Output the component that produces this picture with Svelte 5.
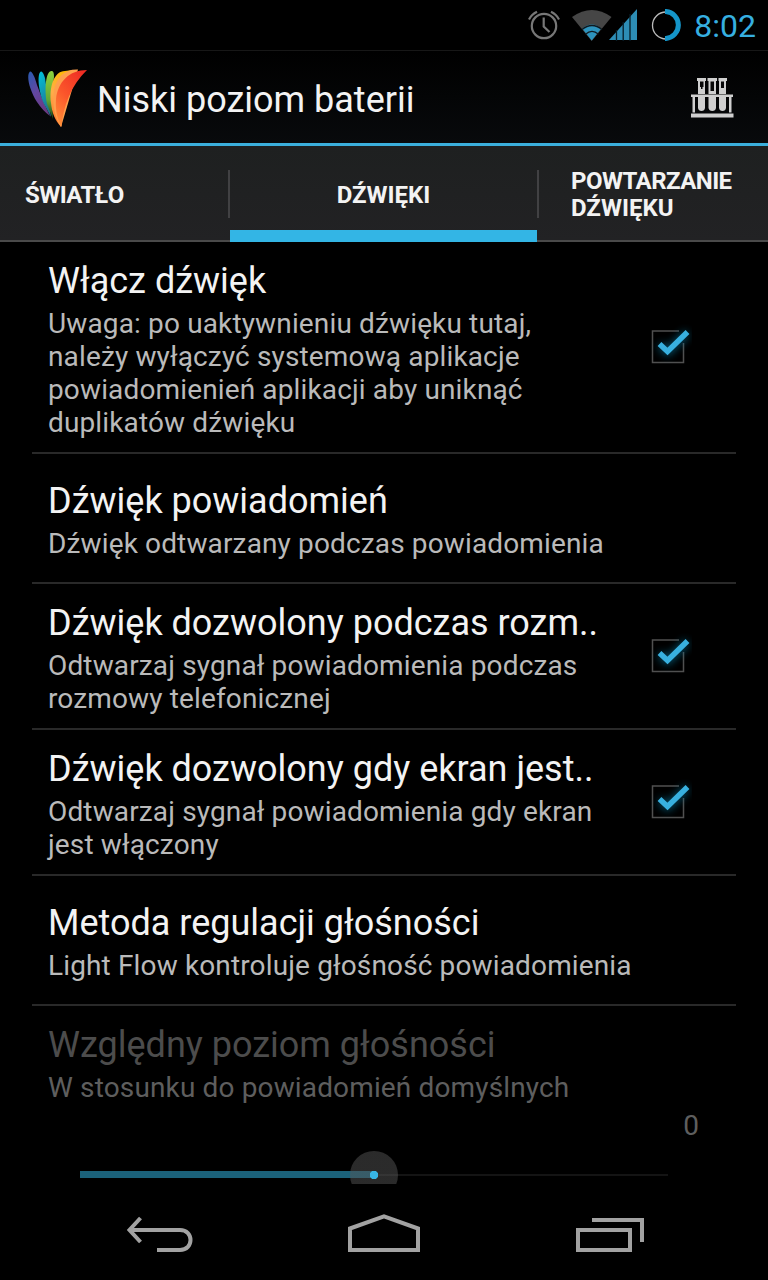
<script lang="ts">
	interface Item {
		title: string;
		lines: string[];
		height: number;
		checked?: boolean;
	}

	let items = $state<Item[]>([
		{
			title: 'Włącz dźwięk',
			lines: [
				'Uwaga: po uaktywnieniu dźwięku tutaj,',
				'należy wyłączyć systemową aplikacje',
				'powiadomienień aplikacji aby uniknąć',
				'duplikatów dźwięku'
			],
			height: 212,
			checked: true
		},
		{ title: 'Dźwięk powiadomień', lines: ['Dźwięk odtwarzany podczas powiadomienia'], height: 130 },
		{
			title: 'Dźwięk dozwolony podczas rozm..',
			lines: ['Odtwarzaj sygnał powiadomienia podczas', 'rozmowy telefonicznej'],
			height: 146,
			checked: true
		},
		{
			title: 'Dźwięk dozwolony gdy ekran jest..',
			lines: ['Odtwarzaj sygnał powiadomienia gdy ekran', 'jest włączony'],
			height: 146,
			checked: true
		},
		{ title: 'Metoda regulacji głośności', lines: ['Light Flow kontroluje głośność powiadomienia'], height: 130 }
	]);
	let volume = 50;
</script>

<div class="screen">
	<div class="status">
		<svg width="258" height="50" viewBox="510 0 258 50" fill="none">
			<g stroke="#777" stroke-width="2.2">
				<circle cx="544" cy="26" r="12.2" />
				<path d="M543.7 17.5V26.5L549.5 32" />
				<path d="M529 19.5Q531.5 14.500 537 11.800M559 19.500Q556.500 14.500 551 11.800" />
			</g>
			<path d="M572 17Q592 3 611.500 17L591.700 41Z" fill="#464646" />
			<path d="M582.200 28.500Q592 20.500 601.200 28.500L591.700 40.500Z" fill="#2d93bd" />
			<path d="M582 29.500Q592 21.500 602 29.500M585.500 34.300Q592 28.500 598.500 34.300" stroke="#101a20" stroke-width="1.300" />
			<path d="M609 40L637 9V40Z" fill="#2d8db5" />
			<path d="M616.500 30V41M623.200 22V41M630 14V41" stroke="#071c26" stroke-width="1.300" />
			<circle cx="666" cy="25.500" r="13.500" stroke="#bcbcbc" stroke-width="1.300" />
			<path d="M665 11.600H666A13.500 13.500 0 0 1 666 38.500H665" stroke="#1495c9" stroke-width="5" />
		</svg>
		<span class="clock">8:02</span>
	</div>

	<header>
		<svg class="logo" width="62" height="62" viewBox="27 67 62 62">
			<defs>
				<linearGradient id="violet" x1="0" y1="0" x2=".6" y2="1"><stop stop-color="#285bb2" /><stop offset=".5" stop-color="#6346a0" /><stop offset="1" stop-color="#693a82" /></linearGradient>
				<linearGradient id="cyan" x1="0" y1="0" x2=".3" y2="1"><stop stop-color="#00c2dd" /><stop offset="1" stop-color="#22718c" /></linearGradient>
				<linearGradient id="green" x1="0" y1="0" x2="0" y2="1"><stop stop-color="#8ed23e" /><stop offset=".6" stop-color="#62a735" /><stop offset="1" stop-color="#1d481b" /></linearGradient>
				<linearGradient id="amber" x1=".6" y1="0" x2=".3" y2="1"><stop stop-color="#ffb900" /><stop offset=".5" stop-color="#ffad4a" /><stop offset="1" stop-color="#ff7429" /></linearGradient>
				<linearGradient id="red" x1=".8" y1="0" x2=".2" y2="1"><stop stop-color="#ef2d24" /><stop offset=".55" stop-color="#fb572b" /><stop offset="1" stop-color="#ff8e38" /></linearGradient>
			</defs>
			<path d="M30 71.500C26 75 29 89 37 102Q43 111 50 116Q44 104 37 85C35 77 32 71 30 71.500Z" fill="url(#violet)" />
			<path d="M41 71.500C37 73 38 90 44 104L51 117Q48 98 45 78Q43 71 41 71.500Z" fill="url(#cyan)" />
			<path d="M52 71C46 70 44 88 47 104L53 119Q51 95 54 77Q54 71 52 71Z" fill="url(#green)" />
			<path d="M65 71C54 71 49 87 51 103C52 113 55 120 61 127L65 90L73 70Z" fill="url(#amber)" />
			<path d="M78 69.500C64 69 57 77 54 90C52 105 55 118 61 127Z" fill="#ffa04c" />
			<path d="M87 70C69 70 58 82 56 99C55 111 58 121 61.500 127C63 107 71 85 87 70Z" fill="url(#red)" />
		</svg>
		<h1>Niski poziom baterii</h1>
		<svg class="tubes" width="44" height="42" viewBox="690 77 44 42" fill="#cfcfcf">
			<path d="M697 78H706V81H705V94H698V81H697ZM707.500 78H717V81H716V94H708.500V81H707.500ZM718.500 78H727V81H726V94H719V81H718.500Z" />
			<path d="M700 81.500H703.500V87H702.500V89H701V87H700ZM710.500 81.500H714V91H710.500ZM721 81.500H724V88H721Z" fill="#080808" />
			<path d="M691 94.500H733V97H731.500V112.500H729V97H726V108Q725.500 111 722.500 111T719 108V97H716V108Q715.500 111 712.300 111T708.500 108V97H705V108Q704.500 111 701.500 111T698 108V97H695V112.500H692.500V97H691ZM691 113.500H733.500V117.500H691Z" />
		</svg>
	</header>

	<nav>
		<div class="tab first"><span class="tight">ŚWIATŁO</span></div>
		<div class="tab active">DŹWIĘKI</div>
		<div class="tab last"><div><span class="tight">POWTARZANIE</span><br />DŹWIĘKU</div></div>
	</nav>

	<main>
		{#each items as item}
			<div class="row" style="height: {item.height}px">
				<div class="text">
					<div class="title">{item.title}</div>
					{#each item.lines as line}
						<div class="summary">{line}</div>
					{/each}
				</div>
				{#if item.checked}
					<svg class="check" width="52" height="52" viewBox="0 0 52 52" fill="none">
						<path d="M39 11H12.500V42.500H43.500V23" stroke="#505050" stroke-width="1.500" />
						<path class="glow" d="M20 25L27.500 32L47 13" />
						<path d="M19.500 24L27.500 31.500L47.500 12" stroke="#38b0df" stroke-width="5.500" />
					</svg>
				{/if}
			</div>
		{/each}
		<div class="volume">
			<div class="title">Względny poziom głośności</div>
			<div class="summary">W stosunku do powiadomień domyślnych</div>
			<div class="value">0</div>
			<div class="slider">
				<div class="fill" style="width: {volume}%"></div>
				<div class="thumb" style="left: {volume}%"></div>
			</div>
		</div>
	</main>

	<footer>
		<svg width="768" height="96" viewBox="0 1184 768 96" fill="none" stroke="#a2a2a2" stroke-width="4">
			<path d="M129 1230H180C194 1230 194 1250 180 1250H157M140.500 1218L129.500 1230L140.500 1242" />
			<path d="M350 1228.500L384 1216.300L418 1228.500V1250H350Z" />
			<path d="M578 1230H630V1250H578ZM592 1220H642V1242" />
		</svg>
	</footer>
</div>

<style>
	:global(body) { margin: 0; background: #000; }

	.screen {
		display: flex;
		flex-direction: column;
		width: 768px;
		height: 1280px;
		overflow: hidden;
		background: #000;
		color: #f3f3f3;
		font-family: Roboto, sans-serif;
	}

	.status { position: relative; display: flex; justify-content: flex-end; height: 50px; }
	.clock {
		position: absolute;
		right: 12px;
		top: 6px;
		font-size: 32px;
		line-height: 40px;
		color: #36afe0;
	}

	header {
		display: flex;
		align-items: center;
		box-sizing: border-box;
		height: 96px;
		padding: 2px 34px 0 27px;
		border-top: 1px solid #171717;
		border-bottom: 3px solid #3bafdc;
		background: linear-gradient(#000, #080a0c);
	}
	h1 { flex: 1; margin: 4px 0 0 8px; font-size: 36px; line-height: 42px; font-weight: 400; }

	nav { display: flex; height: 96px; background: linear-gradient(#1e2020, #222224); font-size: 24px; font-weight: 700; line-height: 27px; }
	.tab {
		position: relative;
		display: flex;
		align-items: center;
		box-sizing: border-box;
		padding-top: 4px;
		border-bottom: 2px solid #4a4a4a;
	}
	.tab + .tab::before {
		content: '';
		position: absolute;
		left: -2px;
		top: 24px;
		width: 2px;
		height: 48px;
		background: #414143;
	}
	.first { width: 230px; padding-left: 25px; }
	.active { width: 307px; justify-content: center; border-bottom: 12px solid #33b5e5; padding-top: 14px; }
	.last { flex: 1; padding-left: 34px; }
	.tab.last::before { left: 0; }
	.tight { letter-spacing: -0.55px; }

	main { height: 942px; overflow: hidden; }
	.row {
		display: flex;
		align-items: center;
		box-sizing: border-box;
		margin: 0 32px;
		padding: 0 16px;
		border-bottom: 2px solid #292929;
	}
	.text { flex: 1; padding-top: 4px; white-space: nowrap; }
	.title { margin-bottom: 4px; font-size: 36px; line-height: 43px; }
	.summary { font-size: 28px; line-height: 33px; letter-spacing: 0.14px; color: #bababa; }
	.check { margin: 0 28px 2px 0; }
	.glow { stroke: #0879a0; stroke-width: 6px; opacity: 0.8; filter: blur(4px); }

	.volume { padding: 18px 48px 0; white-space: nowrap; }
	.volume .title { color: #4c4c4c; }
	.volume .summary { color: #5e5e5e; }
	.value { padding: 5px 21px 0 0; font-size: 28px; line-height: 33px; text-align: right; color: #5e5e5e; }
	.slider { position: relative; width: 588px; height: 2px; margin: 32px 0 0 32px; background: #141414; }
	.fill { position: absolute; top: -3px; left: 0; height: 7px; background: #1b627a; }
	.thumb {
		position: absolute;
		top: -23px;
		width: 48px;
		height: 48px;
		border-radius: 50%;
		transform: translateX(-50%);
		background: radial-gradient(circle, #38b5e5 0 4px, rgba(85, 85, 85, 0.5) 4.5px);
	}

	footer { height: 96px; background: #000; }
</style>
